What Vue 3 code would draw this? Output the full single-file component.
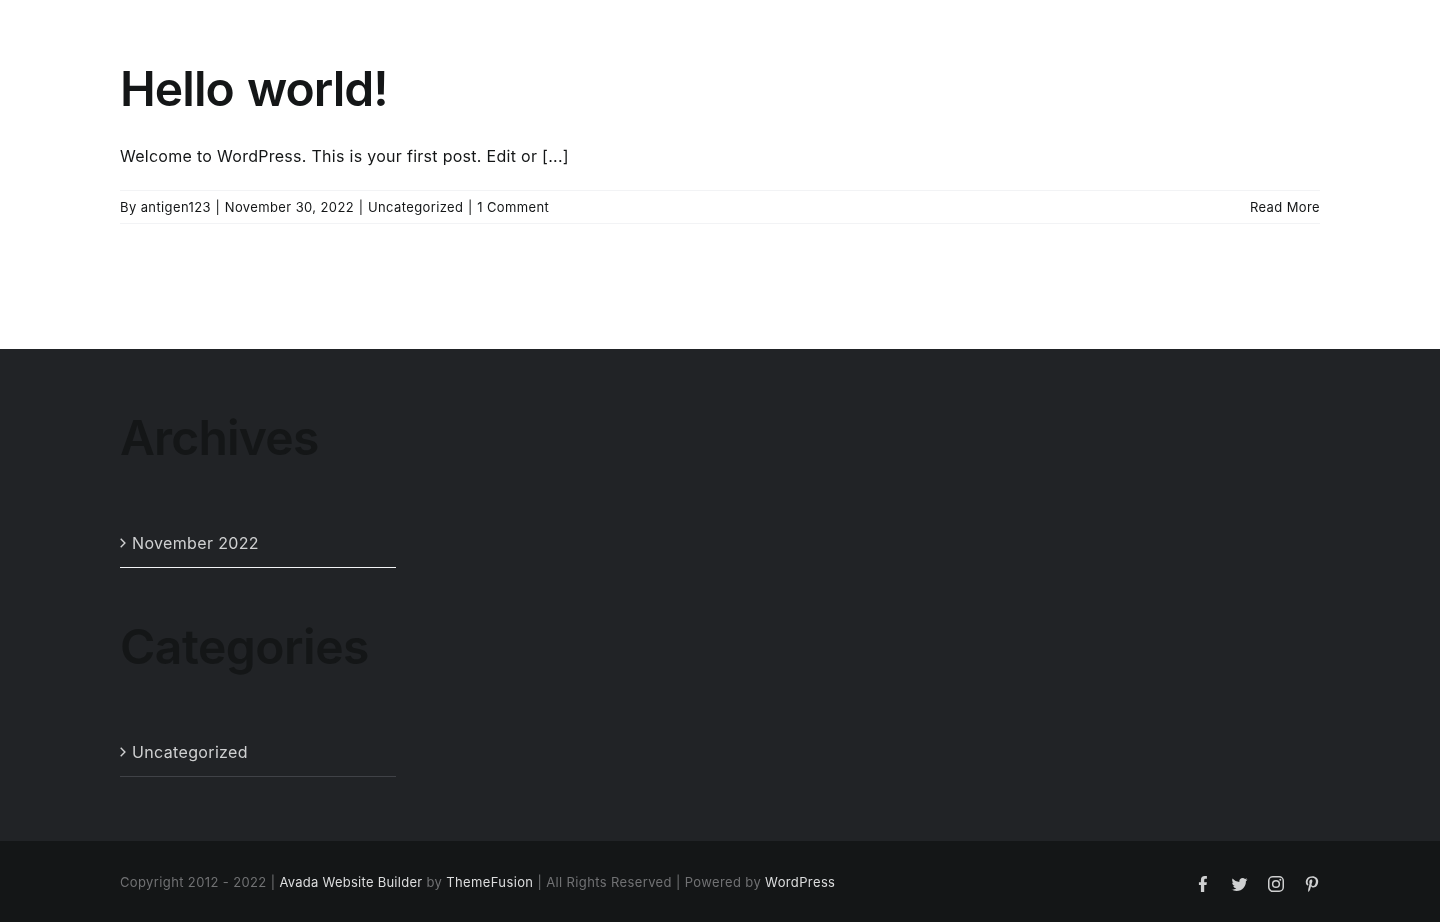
<script setup>
const socials = [
  { name: 'Facebook', d: 'M4.9 16V9H2.9V6.2H4.9V4.2C4.9 1.4 6.3 0 8.8 0H10.9V2.8H9.6C8.5 2.8 8.2 3.3 8.2 4.3V6.2H10.9L10.5 9H8.2V16Z' },
  { name: 'Twitter', d: 'M15.5 3.5C14.9 3.8 14.3 3.9 13.6 4C14.3 3.6 14.8 3 15.1 2.2C14.4 2.6 13.7 2.9 13 3C12.4 2.4 11.5 2 10.6 2C8.8 2 7.3 3.5 7.3 5.3L7.4 6C4.7 5.9 2.2 4.6 0.6 2.6C0.3 3.1 0.2 3.6 0.2 4.2C0.2 5.4 0.7 6.4 1.6 7C1.1 7 0.6 6.8 0.2 6.6C0.2 8.3 1.3 9.6 2.8 9.9C2.3 10 1.8 10 1.3 9.9C1.7 11.2 2.9 12.2 4.4 12.2C3 13.3 1.3 13.8 -0.5 13.6C1 14.5 2.7 15 4.5 15C10.6 15 13.9 10 13.9 5.7V5.2C14.5 4.8 15.1 4.2 15.5 3.5Z' },
  { name: 'Instagram' },
  { name: 'Pinterest', d: 'M8.4 0.2C4 0.2 1.8 3.2 1.8 5.9C1.8 7.5 2.4 8.9 3.7 9.4C3.9 9.5 4.1 9.4 4.2 9.2L4.4 8.4C4.4 8.2 4.4 8.1 4.2 7.9C3.8 7.5 3.6 6.9 3.6 6.1C3.6 3.8 5.2 1.8 8.1 1.8C10.5 1.8 11.9 3.3 11.9 5.2C11.9 7.8 10.7 10 9 10C8 10 7.3 9.2 7.5 8.3C7.8 7.1 8.4 5.9 8.4 5C8.4 4.3 8 3.6 7.1 3.6C6.1 3.6 5.3 4.7 5.3 6.1C5.3 7 5.6 7.6 5.6 7.6L4.3 12.9C4 14.2 4.3 15.7 4.3 15.9C5 15.5 6 14 6.3 12.9L7 10.2C7.4 10.9 8.5 11.5 9.5 11.5C12.2 11.5 14.2 8.9 14.2 5.3C14.2 2.6 11.8 0.2 8.4 0.2Z' }
]
const widgets = [
  { title: 'Archives', item: 'November 2022', cls: 'archives' },
  { title: 'Categories', item: 'Uncategorized', cls: 'categories' }
]
</script>

<template>
  <div class="page">
    <main>
      <h2>Hello world!</h2>
      <p>Welcome to WordPress. This is your first post. Edit or [...]</p>
      <div class="meta">
        <div>By <a>antigen123</a><i>|</i><span>November 30, 2022</span><i>|</i><a>Uncategorized</a><i>|</i><a>1 Comment</a></div>
        <a>Read More</a>
      </div>
    </main>
    <footer>
      <section v-for="w in widgets" :key="w.title" :class="w.cls">
        <h2>{{ w.title }}</h2>
        <div class="item">
          <svg width="6" height="11" viewBox="0 0 6 11"><path d="M0.7 1.8L4.9 6L0.7 10.2" fill="none" stroke="currentColor" stroke-width="1.4" /></svg>
          <a>{{ w.item }}</a>
        </div>
      </section>
    </footer>
    <div class="copyright">
      <div class="text">Copyright 2012 - 2022 | <a class="tight">Avada Website Builder</a> by <a>ThemeFusion</a> | All Rights Reserved | Powered by <a>WordPress</a></div>
      <div class="socials">
        <svg v-for="s in socials" :key="s.name" width="16" height="16" viewBox="0 0 16 16" :aria-label="s.name">
          <path v-if="s.d" :d="s.d" fill="currentColor" />
          <g v-else fill="none" stroke="currentColor" stroke-width="1.5">
            <rect x="0.75" y="0.75" width="14.5" height="14.5" rx="4" />
            <circle cx="8" cy="8" r="3.35" />
            <circle cx="12.3" cy="3.7" r="1" fill="currentColor" stroke="none" />
          </g>
        </svg>
      </div>
    </div>
  </div>
</template>

<style>
body { margin: 0; background: #fff; }
</style>

<style scoped>
.page { height: 922px; overflow: hidden; display: flex; flex-direction: column; font-family: Inter, sans-serif; color: #141617; will-change: transform; }
main { height: 349px; box-sizing: border-box; padding: 60px 120px 0; }
h2 { margin: 0; font-size: 48px; line-height: 58px; font-weight: 600; letter-spacing: -0.95px; word-spacing: 2px; }
p { margin: 24px 0 19px; font-size: 16px; line-height: 29px; letter-spacing: 0.26px; word-spacing: 0.15px; }
.meta { display: flex; justify-content: space-between; border-top: 1px solid #f2f3f5; border-bottom: 1px solid #f2f3f5; height: 32px; line-height: 33px; font-size: 13px; letter-spacing: 0.39px; }
.meta i { font-style: normal; margin: 0 4.5px 0 4.6px; }
footer { height: 492px; box-sizing: border-box; padding: 60px 120px 0; background: #212326; }
footer section { width: 276px; height: 209px; }
.archives h2 { letter-spacing: -0.8px; }
.categories h2 { letter-spacing: -0.5px; }
.item { margin-top: 53px; display: flex; align-items: center; gap: 6px; height: 45px; padding-bottom: 2px; color: #cfd0d1; border-bottom: 1px solid #404247; font-size: 16px; letter-spacing: 0.35px; }
.archives .item { border-color: #f2f3f5; }
.copyright { flex: 1; padding: 0 120px; background: #141617; display: flex; justify-content: space-between; color: #707173; }
.text { padding-top: 30px; font-size: 13px; line-height: 22px; letter-spacing: 0.375px; }
.text a { color: #dcddde; }
.text .tight { letter-spacing: 0.26px; }
.socials { padding-top: 35px; display: flex; gap: 20px; color: #cfd0d1; }
.socials svg { overflow: visible; }
</style>
